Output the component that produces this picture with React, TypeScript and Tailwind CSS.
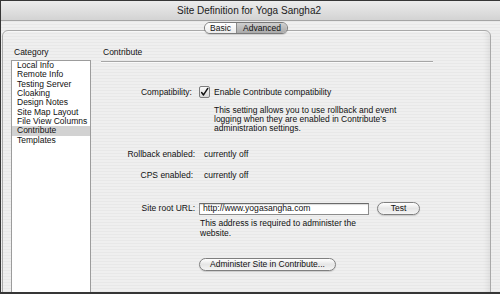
import React from "react";

const font = "font-['Liberation_Sans',Arial,sans-serif]";

const items = [
  "Local Info",
  "Remote Info",
  "Testing Server",
  "Cloaking",
  "Design Notes",
  "Site Map Layout",
  "File View Columns",
  "Contribute",
  "Templates",
];

export default function App() {
  return (
    <div
      className={`w-[500px] h-[294px] overflow-hidden border-l border-t border-b-2 border-[#363636] ${font} text-[8.5px] text-[#111] bg-[image:repeating-linear-gradient(180deg,#efefef_0px,#efefef_2px,#e8e8e8_2px,#e8e8e8_3px)]`}
    >
      {/* title bar */}
      <div className="h-[20px] flex items-center justify-center border-b border-[#a4a4a4] bg-[linear-gradient(180deg,#ececec,#d3d3d3)] text-[10px] text-[#1a1a1a] pr-[3px]">
        Site Definition for Yoga Sangha2
      </div>

      {/* group box */}
      <div className="relative mt-[9px] ml-[1px] w-[489px] h-[300px] rounded-[6px] border border-[#a9a9a9] shadow-[inset_-8px_0_6px_-6px_rgba(0,0,0,0.08),inset_0_1px_0_#f8f8f8]">
        {/* segmented control */}
        <div className="absolute top-[-9px] left-[201px] flex h-[12px] rounded-[6px] border border-[#7a7a7a] overflow-hidden text-[8.5px] shadow-[0_1px_1px_rgba(0,0,0,0.15)]">
          <div className="w-[32px] flex items-center justify-center bg-[linear-gradient(180deg,#ffffff,#ececec)] border-r border-[#8a8a8a]">
            Basic
          </div>
          <div className="w-[50px] flex items-center justify-center bg-[linear-gradient(180deg,#cfcfcf,#a9a9a9)]">
            Advanced
          </div>
        </div>

        <div className="flex">
          {/* left column */}
          <div className="pl-[8px] pt-[16px] flex flex-col">
            <div className="h-[10px] leading-[10px] pl-[3px]">Category</div>
            <div className="mt-[3px] w-[80px] h-[240px] bg-white border border-[#9c9c9c]">
              {items.map((it) => (
                <div
                  key={it}
                  className={`h-[9.33px] leading-[9.33px] pl-[5px] whitespace-nowrap ${
                    it === "Contribute" ? "bg-[#d2d2d2]" : ""
                  }`}
                >
                  {it}
                </div>
              ))}
            </div>
          </div>

          {/* right column */}
          <div className="ml-[10px] pt-[16px] w-[332px] flex flex-col">
            <div className="h-[10px] leading-[10px] pl-[2px]">Contribute</div>
            <div className="mt-[4px] h-px bg-[#a6a6a6] shadow-[0_1px_0_#fafafa]" />

            {/* compatibility */}
            <div className="mt-[24px] flex items-center h-[12px]">
              <div className="w-[91px] text-right">Compatibility:</div>
              <div className="ml-[7px] w-[11px] h-[12px] rounded-[2px] border border-[#7d7d7d] bg-[linear-gradient(180deg,#fafafa,#d8d8d8)] flex items-center justify-center">
                <svg width="11" height="11" viewBox="0 0 11 11">
                  <path
                    d="M2 5.5 L4.3 8.5 L9.5 0.5"
                    fill="none"
                    stroke="#111"
                    strokeWidth="1.8"
                    strokeLinecap="round"
                    strokeLinejoin="round"
                  />
                </svg>
              </div>
              <div className="ml-[4px]">Enable Contribute compatibility</div>
            </div>
            <div className="mt-[7.5px] ml-[113px] leading-[9px]">
              <div>This setting allows you to use rollback and event</div>
              <div>logging when they are enabled in Contribute's</div>
              <div>administration settings.</div>
            </div>

            {/* rollback */}
            <div className="mt-[16.5px] flex h-[10px] items-center">
              <div className="w-[94px] text-right">Rollback enabled:</div>
              <div className="ml-[9px]">currently off</div>
            </div>

            {/* CPS */}
            <div className="mt-[11px] flex h-[10px] items-center">
              <div className="w-[92px] text-right">CPS enabled:</div>
              <div className="ml-[11px]">currently off</div>
            </div>

            {/* site root */}
            <div className="mt-[22px] flex h-[13px] items-center">
              <div className="w-[94px] text-right">Site root URL:</div>
              <div className="ml-[4px] w-[170px] h-[12px] bg-white border border-[#8c8c8c] border-t-[#6a6a6a] shadow-[inset_0_1px_1px_rgba(0,0,0,0.15)] flex items-center pl-[3px] text-[8.6px]">
                http://www.yogasangha.com
              </div>
              <div className="ml-[8px] w-[43px] h-[13px] rounded-full border border-[#7f7f7f] bg-[linear-gradient(180deg,#ffffff,#e6e6e6_50%,#f4f4f4)] flex items-center justify-center shadow-[0_1px_1px_rgba(0,0,0,0.15)]">
                Test
              </div>
            </div>
            <div className="mt-[4px] ml-[99px] leading-[9.5px]">
              <div>This address is required to administer the</div>
              <div>website.</div>
            </div>

            {/* administer */}
            <div className="mt-[20px] ml-[98px] w-[137px] h-[13px] rounded-full border border-[#7f7f7f] bg-[linear-gradient(180deg,#ffffff,#e6e6e6_50%,#f4f4f4)] flex items-center justify-center shadow-[0_1px_1px_rgba(0,0,0,0.15)]">
              Administer Site in Contribute...
            </div>
          </div>
        </div>
      </div>
    </div>
  );
}
